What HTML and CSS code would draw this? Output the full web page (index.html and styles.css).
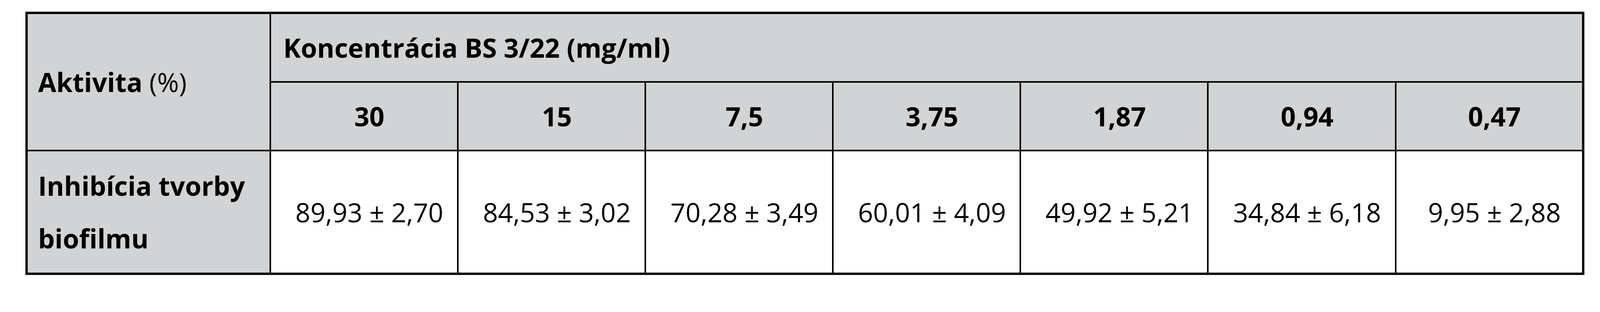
FILE: index.html
```html
<!DOCTYPE html>
<html lang="sk">
<head>
<meta charset="utf-8">
<title>Aktivita BS 3/22</title>
<link rel="stylesheet" href="styles.css">
</head>
<body>
<div class="page">
<table class="data-table">
  <colgroup>
    <col class="col-label">
    <col class="col-val"><col class="col-val"><col class="col-val"><col class="col-val"><col class="col-val"><col class="col-val"><col class="col-val">
  </colgroup>
  <thead>
    <tr class="row-group">
      <th class="label-cell" rowspan="2">Aktivita <span class="unit">(%)</span></th>
      <th class="group-cell" colspan="7">Koncentrácia BS 3/22 (mg/ml)</th>
    </tr>
    <tr class="row-conc">
      <th class="conc-cell">30</th>
      <th class="conc-cell">15</th>
      <th class="conc-cell">7,5</th>
      <th class="conc-cell">3,75</th>
      <th class="conc-cell">1,87</th>
      <th class="conc-cell">0,94</th>
      <th class="conc-cell">0,47</th>
    </tr>
  </thead>
  <tbody>
    <tr class="row-data">
      <th class="label-cell label-multi">Inhibícia tvorby<br>biofilmu</th>
      <td class="val-cell">89,93 ± 2,70</td>
      <td class="val-cell">84,53 ± 3,02</td>
      <td class="val-cell">70,28 ± 3,49</td>
      <td class="val-cell">60,01 ± 4,09</td>
      <td class="val-cell">49,92 ± 5,21</td>
      <td class="val-cell">34,84 ± 6,18</td>
      <td class="val-cell">9,95 ± 2,88</td>
    </tr>
  </tbody>
</table>
</div>
</body>
</html>
```
FILE: styles.css
```css
html, body {
  margin: 0;
  padding: 0;
  background: #ffffff;
}

/* horizontal measures in vw (reference frame is 6006px wide), vertical in px */
.page {
  padding: 30px 0 0 1.598vw;
}

.data-table {
  border-collapse: collapse;
  table-layout: fixed;
  width: 97.272vw;
  border: 6px solid #000;
  font-family: "Open Sans", "Noto Sans", "DejaVu Sans", sans-serif;
  font-size: 1.648vw;
  color: #000;
}

.col-label { width: 15.218vw; }
.col-val { width: 11.722vw; }

.data-table th,
.data-table td {
  border: 4px solid #000;
  vertical-align: middle;
  white-space: nowrap;
}

.data-table th {
  background: #d1d3d4;
  font-weight: 700;
}

.row-group { height: 177px; }
.row-conc { height: 176px; }
.row-data { height: 316px; }

.data-table .label-cell {
  text-align: left;
  padding: 0 0.333vw 0 0.633vw;
}

.data-table .label-multi {
  line-height: 135px;
}

.unit {
  font-weight: 400;
}

.data-table .group-cell {
  text-align: left;
  padding: 0 0.333vw 0 0.766vw;
}

.data-table .conc-cell {
  text-align: center;
  padding: 0 0.167vw 0 0.833vw;
}

.data-table .val-cell {
  background: #ffffff;
  text-align: center;
  font-weight: 400;
  padding: 0 0.167vw 0 0.833vw;
}
```
